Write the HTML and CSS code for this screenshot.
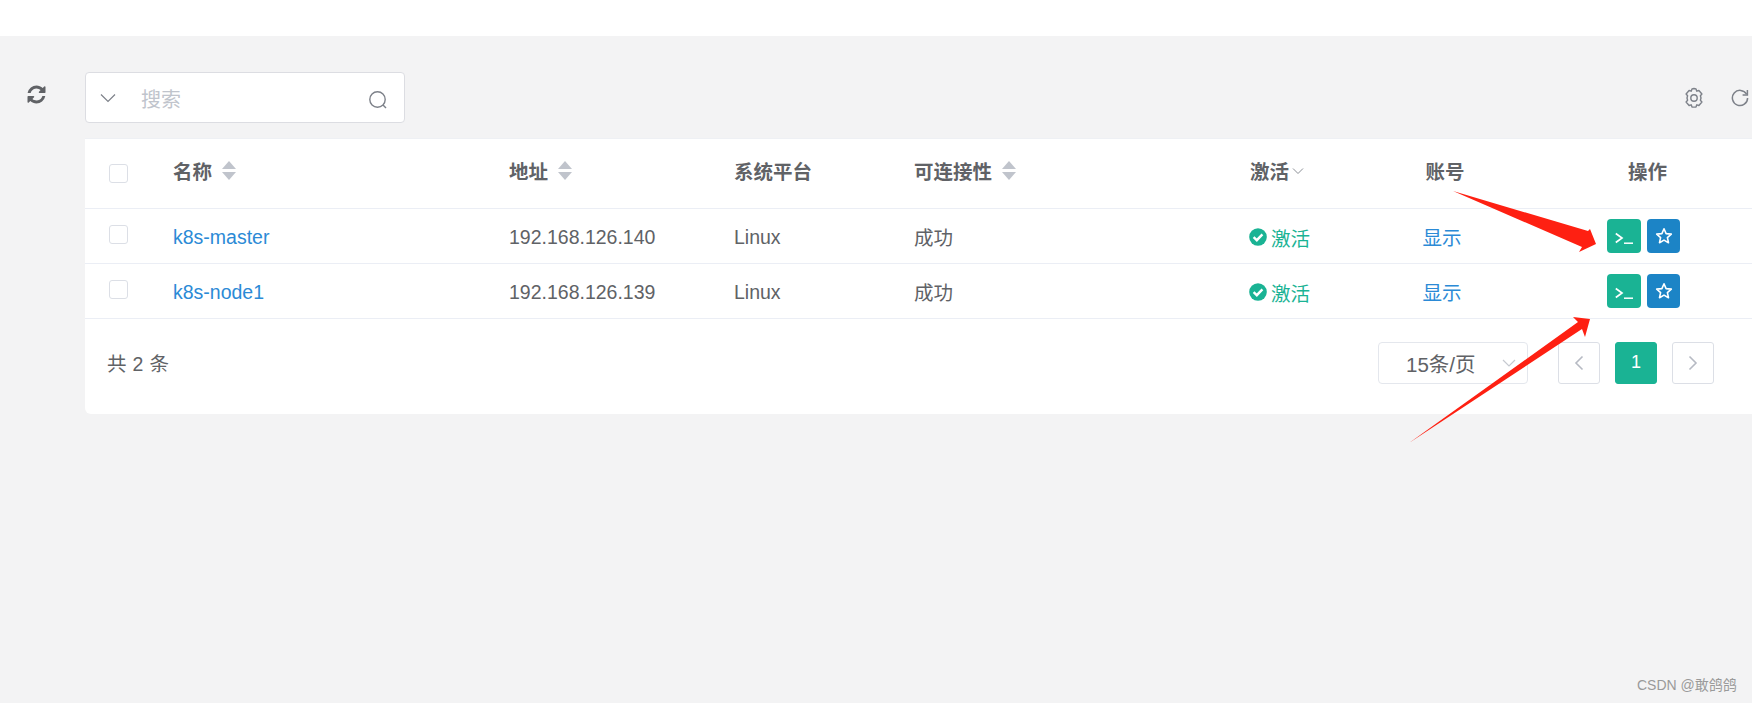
FILE: index.html
```html
<!DOCTYPE html>
<html lang="zh-CN">
<head>
<meta charset="utf-8">
<title>资产列表</title>
<link rel="stylesheet" href="styles.css">
</head>
<body>
<div class="topbar"></div>
<div class="page">
  <aside class="rail">
    <svg class="rail-icon" viewBox="0 0 1792 1792"><path fill="#606266" d="M1639 1056q0 5-1 7-64 268-268 434.5t-478 166.5q-146 0-282.5-55t-243.5-157l-129 129q-19 19-45 19t-45-19-19-45v-448q0-26 19-45t45-19h448q26 0 45 19t19 45-19 45l-137 137q71 66 161 102t187 36q134 0 250-65t186-179q11-17 53-117 8-23 30-23h192q13 0 22.5 9.5t9.5 22.5zm25-800v448q0 26-19 45t-45 19h-448q-26 0-45-19t-19-45 19-45l138-138q-148-137-349-137-134 0-250 65t-186 179q-11 17-53 117-8 23-30 23h-199q-13 0-22.5-9.5t-9.5-22.5v-7q65-268 270-434.5t480-166.5q146 0 284 55.5t245 156.5l130-129q19-19 45-19t45 19 19 45z"/></svg>
  </aside>
  <main class="content">
    <div class="toolbar">
      <div class="search">
        <svg class="search-caret" viewBox="0 0 16 10"><path d="M1 1.5 8 8.5 15 1.5" fill="none" stroke="#7d8189" stroke-width="1.2"/></svg>
        <span class="search-text">搜索</span>
        <svg class="search-glass" viewBox="0 0 20 20"><circle cx="9.5" cy="9.5" r="7.7" fill="none" stroke="#7d8189" stroke-width="1.4"/><path d="M15 15 18 18" stroke="#7d8189" stroke-width="1.4"/></svg>
      </div>
      <div class="tools">
        <svg class="tool-gear" viewBox="0 0 20 22"><path d="M10 1.5 12 1.9 12.8 4.2 14.9 3.5 17.9 7 16.4 8.8 17 11 16.4 13.2 17.9 15 14.9 18.5 12.8 17.8 12 20.1 8 20.1 7.2 17.8 5.1 18.5 2.1 15 3.6 13.2 3 11 3.6 8.8 2.1 7 5.1 3.5 7.2 4.2 8 1.9Z" fill="none" stroke="#7d8189" stroke-width="1.4" stroke-linejoin="round"/><circle cx="10" cy="11" r="3.2" fill="none" stroke="#7d8189" stroke-width="1.4"/></svg>
        <svg class="tool-reload" viewBox="0 0 18 18"><path d="M15.6 5.2A7.6 7.6 0 1 0 16.6 9" fill="none" stroke="#7d8189" stroke-width="1.5"/><path d="M16.4 1 16.4 6 11.6 6" fill="none" stroke="#7d8189" stroke-width="1.5"/></svg>
      </div>
    </div>
    <section class="card">
      <div class="row row-head">
        <div class="cell-check"><span class="checkbox check-head"></span></div>
        <div class="cell head-cell">名称<span class="sort"><i class="up"></i><i class="down"></i></span></div>
        <div class="cell head-cell">地址<span class="sort"><i class="up"></i><i class="down"></i></span></div>
        <div class="cell head-cell">系统平台</div>
        <div class="cell head-cell">可连接性<span class="sort"><i class="up"></i><i class="down"></i></span></div>
        <div class="cell head-cell">激活<svg class="filter" viewBox="0 0 12 8"><path d="M1 1.5 6 6.5 11 1.5" fill="none" stroke="#8b8f96" stroke-width="1"/></svg></div>
        <div class="cell head-cell cell-center">账号</div>
        <div class="cell head-cell cell-center shift-op">操作</div>
      </div>
      <div class="row">
        <div class="cell-check"><span class="checkbox"></span></div>
        <div class="cell nudge"><a class="link">k8s-master</a></div>
        <div class="cell nudge">192.168.126.140</div>
        <div class="cell nudge">Linux</div>
        <div class="cell">成功</div>
        <div class="cell active"><svg class="ok" viewBox="0 0 18 18"><circle cx="9" cy="9" r="8.8" fill="#1ab394"/><path d="M4.6 9.2 7.8 12.2 13.4 6.4" fill="none" stroke="#fff" stroke-width="2.4"/></svg>激活</div>
        <div class="cell cell-center shift"><a class="link">显示</a></div>
        <div class="cell cell-actions">
          <span class="btn btn-teal"><svg viewBox="0 0 18 14"><path d="M0.8 2.5 7 7 0.8 11.5" fill="none" stroke="#fff" stroke-width="1.7"/><path d="M9 12.2H18" stroke="#fff" stroke-width="1.5"/></svg></span>
          <span class="btn btn-blue"><svg viewBox="0 0 18 18"><path d="M9 1.8 11.1 6.6 16.3 7.1 12.4 10.6 13.5 15.7 9 13.1 4.5 15.7 5.6 10.6 1.7 7.1 6.9 6.6Z" fill="none" stroke="#fff" stroke-width="1.6" stroke-linejoin="round"/></svg></span>
        </div>
      </div>
      <div class="row">
        <div class="cell-check"><span class="checkbox"></span></div>
        <div class="cell nudge"><a class="link">k8s-node1</a></div>
        <div class="cell nudge">192.168.126.139</div>
        <div class="cell nudge">Linux</div>
        <div class="cell">成功</div>
        <div class="cell active"><svg class="ok" viewBox="0 0 18 18"><circle cx="9" cy="9" r="8.8" fill="#1ab394"/><path d="M4.6 9.2 7.8 12.2 13.4 6.4" fill="none" stroke="#fff" stroke-width="2.4"/></svg>激活</div>
        <div class="cell cell-center shift"><a class="link">显示</a></div>
        <div class="cell cell-actions">
          <span class="btn btn-teal"><svg viewBox="0 0 18 14"><path d="M0.8 2.5 7 7 0.8 11.5" fill="none" stroke="#fff" stroke-width="1.7"/><path d="M9 12.2H18" stroke="#fff" stroke-width="1.5"/></svg></span>
          <span class="btn btn-blue"><svg viewBox="0 0 18 18"><path d="M9 1.8 11.1 6.6 16.3 7.1 12.4 10.6 13.5 15.7 9 13.1 4.5 15.7 5.6 10.6 1.7 7.1 6.9 6.6Z" fill="none" stroke="#fff" stroke-width="1.6" stroke-linejoin="round"/></svg></span>
        </div>
      </div>
      <div class="footer">
        <span class="total">共<span class="num">2</span>条</span>
        <div class="pager">
          <div class="page-size">15条/页<svg viewBox="0 0 14 8"><path d="M1 1 7 7 13 1" fill="none" stroke="#c6c9d0" stroke-width="1.2"/></svg></div>
          <span class="page-btn"><svg viewBox="0 0 10 16"><path d="M8.5 1.5 2 8 8.5 14.5" fill="none" stroke="#b6bac3" stroke-width="1.6"/></svg></span>
          <span class="page-btn page-current">1</span>
          <span class="page-btn"><svg viewBox="0 0 10 16"><path d="M1.5 1.5 8 8 1.5 14.5" fill="none" stroke="#b6bac3" stroke-width="1.6"/></svg></span>
        </div>
      </div>
    </section>
  </main>
</div>
<svg class="arrows" viewBox="0 0 1752 703">
  <polygon fill="#fe2012" points="1453,191 1588,231 1590,229 1596,244 1579,252 1582,247"/>
  <polygon fill="#fe2012" points="1409,443 1578,322 1573,317 1590,319 1585,337 1582,329"/>
</svg>
<span class="watermark">CSDN @敢鸽鸽</span>
</body>
</html>
```
FILE: styles.css
```css
* { box-sizing: border-box; }
html, body { margin: 0; height: 703px; overflow: hidden; }
body {
  position: relative;
  background: #f3f3f4;
  font-family: "Liberation Sans", "Noto Sans CJK SC", sans-serif;
  font-size: 19.5px;
  color: #606266;
}
.topbar { height: 36px; background: #fff; }
.page { display: flex; }
.rail { width: 85px; flex: none; padding: 48px 0 0 27px; }
.rail-icon { display: block; width: 21px; height: 21px; margin-left: -1px; }
.content { flex: 1; min-width: 0; }

.toolbar { display: flex; justify-content: space-between; align-items: center; padding-top: 36px; }
.search {
  width: 320px; height: 51px; display: flex; align-items: center;
  background: #fff; border: 1px solid #dcdde2; border-radius: 4px;
}
.search-caret { width: 16px; height: 10px; margin-left: 14px; }
.search-text { margin-left: 25px; color: #c0c4cc; flex: 1; font-size: 20px; position: relative; top: 1px; }
.search-glass { width: 20px; height: 20px; margin-right: 16px; position: relative; top: 2px; }
.tools { display: flex; align-items: center; gap: 27px; padding-right: 3px; }
.tool-gear { width: 20px; height: 22px; }
.tool-reload { width: 18px; height: 18px; }

.card { margin-top: 15px; background: #fff; border-bottom-left-radius: 6px; height: 276px; }
.row {
  display: grid;
  grid-template-columns: 88px 336px 225px 180px 336px 95px 200px 207px;
  height: 55px;
  border-bottom: 1px solid #ebeef5;
  align-items: center;
}
.row-head { height: 71px; font-weight: 700; border-top: 1px solid #eef0f4; padding-bottom: 6px; }
.cell-check { padding-left: 24px; }
.checkbox {
  display: block; width: 19px; height: 19px;
  border: 1px solid #dcdfe6; border-radius: 3px; background: #fff;
  position: relative; top: -2px;
}
.check-head { top: 3px; }
.head-cell { display: flex; align-items: center; }
.cell { white-space: nowrap; }
.nudge { padding-top: 2px; }
.cell-center { justify-content: center; text-align: center; }
.shift { padding-right: 6px; }
.shift-op { padding-right: 2px; }
.sort { display: inline-flex; flex-direction: column; gap: 3px; margin-left: 10px; }
.sort i { display: block; width: 0; height: 0; border-left: 7px solid transparent; border-right: 7px solid transparent; }
.sort .up { border-bottom: 8px solid #c0c4cc; }
.sort .down { border-top: 8px solid #c0c4cc; }
.filter { width: 12px; height: 8px; margin-left: 3px; }
.link { color: #2b8ad6; }
.active { display: flex; align-items: center; color: #1ab394; gap: 4px; padding-top: 2px; margin-left: -1px; }
.ok { width: 18px; height: 18px; }

.cell-actions { display: flex; gap: 6px; padding-left: 62px; margin-top: -1px; }
.btn { width: 34px; height: 34px; border-radius: 4px; display: flex; align-items: center; justify-content: center; }
.btn-teal { background: #1ab394; }
.btn-teal svg { width: 18px; height: 14px; position: relative; top: 2px; }
.btn-blue { background: #1c84c6; width: 33px; }
.btn-blue svg { width: 18px; height: 18px; }

.footer { display: flex; justify-content: space-between; align-items: center; height: 95px; padding: 0 38px 8px 22px; }
.total { position: relative; }
.num { margin: 0 6px; }
.pager { display: flex; align-items: center; }
.page-size {
  width: 150px; height: 42px; border: 1px solid #e4e7ed; border-radius: 4px;
  display: flex; align-items: center; justify-content: space-between;
  padding: 0 11px 0 27px; font-size: 20.5px; margin-right: 30px;
}
.page-size svg { width: 14px; height: 8px; }
.page-btn {
  width: 42px; height: 42px; border: 1px solid #dcdfe6; border-radius: 3px;
  display: flex; align-items: center; justify-content: center; margin-right: 15px;
}
.page-btn svg { width: 10px; height: 16px; }
.page-btn:last-child { margin-right: 0; }
.page-current { background: #1ab394; border-color: #1ab394; color: #fff; font-size: 18px; font-weight: 500; }

.arrows { position: absolute; left: 0; top: 0; width: 1752px; height: 703px; pointer-events: none; }
.watermark { position: absolute; left: 1637px; top: 674px; font-size: 14px; color: #9a9a9a; }
```
